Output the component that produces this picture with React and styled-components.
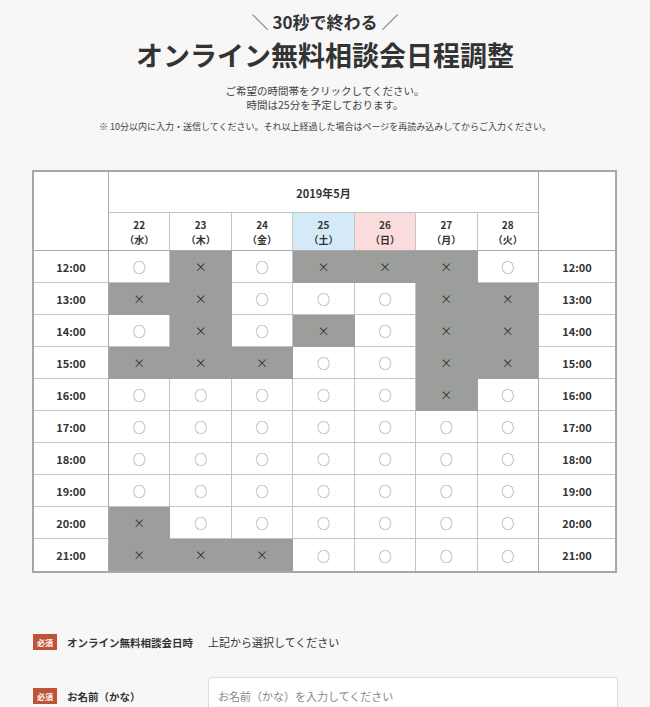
import React from "react";
import styled, { createGlobalStyle } from "styled-components";

const GlobalStyle = createGlobalStyle`
  html, body {
    margin: 0;
    padding: 0;
    background: #f7f7f7;
  }
  body {
    font-family: "Noto Sans CJK JP", "Noto Sans", sans-serif;
    color: #333;
  }
  * { box-sizing: border-box; }
`;

const days = [
  { num: "22", week: "水" },
  { num: "23", week: "木" },
  { num: "24", week: "金" },
  { num: "25", week: "土", tone: "sat" },
  { num: "26", week: "日", tone: "sun" },
  { num: "27", week: "月" },
  { num: "28", week: "火" },
];

// o = 空き, x = 埋まり
const slots = [
  ["12:00", "oxoxxxo"],
  ["13:00", "xxoooxx"],
  ["14:00", "oxoxoxx"],
  ["15:00", "xxxooxx"],
  ["16:00", "oooooxo"],
  ["17:00", "ooooooo"],
  ["18:00", "ooooooo"],
  ["19:00", "ooooooo"],
  ["20:00", "xoooooo"],
  ["21:00", "xxxoooo"],
];

const App = () => {
  return (
    <Page>
      <GlobalStyle />
      <Header>
        <Catch>
          <Slash>＼</Slash>30秒で終わる<Slash>／</Slash>
        </Catch>
        <Title>オンライン無料相談会日程調整</Title>
        <Lead>
          ご希望の時間帯をクリックしてください。
          <br />
          時間は25分を予定しております。
        </Lead>
        <Note>
          ※ 10分以内に入力・送信してください。それ以上経過した場合はページを再読み込みしてからご入力ください。
        </Note>
      </Header>

      <Calendar>
        <Corner />
        <Month>2019年5月</Month>
        <Corner $right />
        {days.map((d, i) => (
          <DayHead key={d.num} $tone={d.tone} $last={i === days.length - 1}>
            <DayLine>{d.num}</DayLine>
            <DayLine>（{d.week}）</DayLine>
          </DayHead>
        ))}
        {slots.map(([time, marks], r) => {
          const last = r === slots.length - 1;
          return (
            <React.Fragment key={time}>
              <TimeCell $last={last}>{time}</TimeCell>
              {marks.split("").map((m, c) => (
                <Slot
                  key={c}
                  $full={m === "x"}
                  $last={last}
                  $edge={c === marks.length - 1}
                >
                  {m === "x" ? <Cross>×</Cross> : <Circle>○</Circle>}
                </Slot>
              ))}
              <TimeCell $last={last} $right>
                {time}
              </TimeCell>
            </React.Fragment>
          );
        })}
      </Calendar>

      <Form>
        <FieldRow>
          <Label>
            <Required>必須</Required>
            オンライン無料相談会日時
          </Label>
          <Value>上記から選択してください</Value>
        </FieldRow>
        <FieldRow>
          <Label>
            <Required>必須</Required>
            お名前（かな）
          </Label>
          <Input placeholder="お名前（かな）を入力してください" />
        </FieldRow>
      </Form>
    </Page>
  );
};

const Page = styled.div`
  width: 650px;
  height: 707px;
  overflow: hidden;
  padding: 10px 32px 0 32px;
`;

const Header = styled.div`
  display: flex;
  flex-direction: column;
  align-items: center;
  text-align: center;
`;

const Catch = styled.div`
  font-size: 17px;
  font-weight: 700;
  line-height: 24px;
  color: #333;
`;

const Slash = styled.span`
  font-weight: 300;
  margin: 0 4px;
  color: #444;
`;

const Title = styled.h1`
  margin: 3px 0 0;
  font-size: 27px;
  font-weight: 700;
  line-height: 36px;
  color: #333;
`;

const Lead = styled.p`
  margin: 11px 0 0;
  font-size: 10.5px;
  line-height: 14px;
  color: #444;
`;

const Note = styled.p`
  margin: 8px 0 0;
  font-size: 9px;
  line-height: 13px;
  color: #444;
  white-space: nowrap;
`;

const Calendar = styled.div`
  margin-top: 37px;
  width: 585px;
  display: grid;
  grid-template-columns: 75px repeat(7, 1fr) 76px;
  grid-template-rows: 41px 38px repeat(10, 32px);
  border: 2px solid #a7a7a7;
  background: #fff;
  font-size: 11px;
  font-weight: 700;
  color: #333;
`;

const Cell = styled.div`
  display: flex;
  align-items: center;
  justify-content: center;
  border-right: 1px solid #c4c4c4;
  border-bottom: 1px solid #c4c4c4;
  background: #fff;
`;

const Corner = styled(Cell)`
  grid-row: span 2;
  border-right: ${(p) => (p.$right ? "none" : "1px solid #a9a9a9")};
  border-bottom: 1px solid #a9a9a9;
`;

const Month = styled(Cell)`
  grid-column: span 7;
  border-right: 1px solid #a9a9a9;
  font-size: 11px;
  padding-top: 2px;
`;

const DayHead = styled(Cell)`
  flex-direction: column;
  text-align: center;
  padding-top: 2px;
  border-bottom: 1px solid #a9a9a9;
  border-right: 1px solid ${(p) => (p.$last ? "#a9a9a9" : "#c4c4c4")};
  background: ${(p) =>
    p.$tone === "sat" ? "#d5eaf8" : p.$tone === "sun" ? "#fbdcdc" : "#fff"};
`;

const DayLine = styled.span`
  display: block;
  font-size: 10px;
  line-height: 14.5px;
`;

const TimeCell = styled(Cell)`
  font-size: 11px;
  border-right: ${(p) => (p.$right ? "none" : "1px solid #a9a9a9")};
  border-bottom: ${(p) => (p.$last ? "none" : "1px solid #c4c4c4")};
`;

const Slot = styled(Cell)`
  background: ${(p) => (p.$full ? "#9b9e9a" : "#fff")};
  border-right-color: ${(p) =>
    p.$edge ? "#a9a9a9" : p.$full ? "#9b9e9a" : "#c4c4c4"};
  border-bottom: ${(p) =>
    p.$last ? "none" : `1px solid ${p.$full ? "#9b9e9a" : "#c4c4c4"}`};
  cursor: ${(p) => (p.$full ? "default" : "pointer")};
`;

const Circle = styled.span`
  font-size: 13px;
  font-weight: 400;
  color: #8c8c8c;
  line-height: 1;
`;

const Cross = styled.span`
  font-size: 12px;
  font-weight: 400;
  color: #333;
  line-height: 1;
`;

const Form = styled.div`
  margin-top: 61px;
  display: flex;
  flex-direction: column;
  gap: 27px;
`;

const FieldRow = styled.div`
  display: grid;
  grid-template-columns: 175px 1fr;
  align-items: center;
  padding-left: 1px;
`;

const Label = styled.div`
  display: flex;
  align-items: center;
  gap: 10px;
  font-size: 10.5px;
  font-weight: 700;
  color: #333;
`;

const Required = styled.span`
  display: inline-flex;
  align-items: center;
  justify-content: center;
  width: 24px;
  height: 16px;
  background: #bf5339;
  color: #fff;
  font-size: 8px;
  font-weight: 700;
`;

const Value = styled.div`
  font-size: 11px;
  color: #333;
`;

const Input = styled.input`
  width: 410px;
  height: 38px;
  padding: 0 9px;
  border: 1px solid #dcdcdc;
  border-radius: 4px;
  background: #fff;
  font-family: "Noto Sans CJK JP", "Noto Sans", sans-serif;
  font-size: 11px;
  color: #333;
  &::placeholder {
    color: #888;
  }
`;

export default App;
